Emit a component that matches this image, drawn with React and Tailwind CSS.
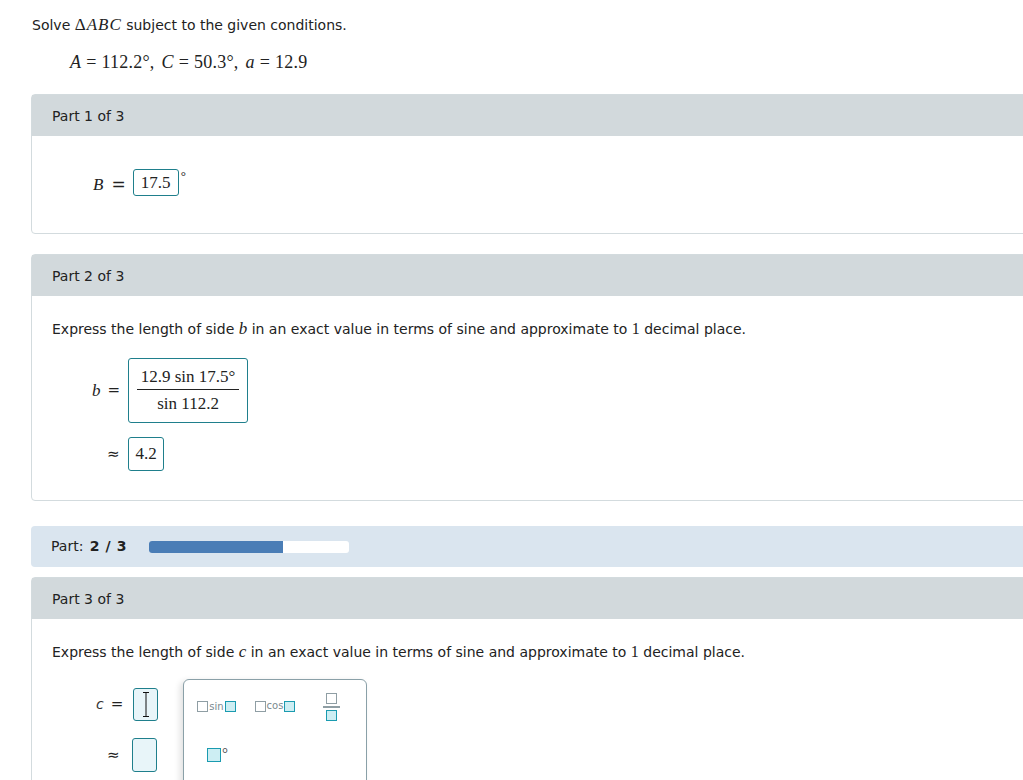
import { useState } from 'react';

const sans = { fontFamily: '"DejaVu Sans", Verdana, sans-serif' };
const serif = { fontFamily: '"Liberation Serif", "Times New Roman", serif' };
const approx = { fontFamily: '"DejaVu Sans", sans-serif' };

function Card({ title, children, bodyClass = '' }) {
  return (
    <div className="w-[1000px] rounded-t-[4px] rounded-bl-[4px] border border-[#d3dbde] bg-white">
      <div className="flex h-[41px] items-center bg-[#d2d9dc] pl-[20px] pt-[1px] text-[14px] text-[#222]">{title}</div>
      <div className={bodyClass}>{children}</div>
    </div>
  );
}

function Box({ children, className = '' }) {
  return (
    <div className={`flex items-center justify-center rounded-[3px] border border-[#1f7f8c] bg-white ${className}`}>
      {children}
    </div>
  );
}

function Slot({ filled, size = 'h-[11px] w-[11px]' }) {
  return (
    <span
      className={`inline-block shrink-0 border-[1.5px] ${size} ${filled ? 'border-[#1a9bb0] bg-[#cdeef3]' : 'border-[#8f9ea4] bg-white'}`}
    />
  );
}

function Eq() {
  return <span className="mx-[5px]">=</span>;
}

export default function App() {
  const [progress] = useState(67);

  return (
    <div className="min-h-[780px] w-full overflow-hidden bg-white text-[#222]" style={sans}>
      <div className="pl-[31px] pt-[15px]">
        <p className="pl-[1px] text-[14px] leading-[20px]">
          Solve <span style={serif} className="text-[17px] tracking-[1px]">Δ<i>ABC</i></span> subject to the given conditions.
        </p>
        <p className="mt-[17px] pl-[39px] text-[18px] leading-[20px] tracking-[0.2px]" style={serif}>
          <i>A</i><Eq />112.2°<span className="mr-[7px]">,</span>
          <i>C</i><Eq />50.3°<span className="mr-[7px]">,</span>
          <i>a</i><Eq />12.9
        </p>

        {/* Part 1 */}
        <div className="mt-[22px]">
          <Card title="Part 1 of 3" bodyClass="h-[97px] pt-[33px]">
            <div className="flex items-start pl-[61px]">
              <span className="mt-[3px] text-[17px]" style={serif}><i>B</i></span>
              <span className="ml-[8px] mr-[7px] mt-[3px] text-[17px]" style={sans}>=</span>
              <Box className="h-[27px] w-[46px] text-[17px]"><span style={serif}>17.5</span></Box>
              <span className="ml-[2px] -mt-[3px] text-[13px]" style={serif}>°</span>
            </div>
          </Card>
        </div>

        {/* Part 2 */}
        <div className="mt-[20px]">
          <Card title="Part 2 of 3" bodyClass="h-[204px] pt-[23px] pl-[20px]">
            <p className="text-[14px] leading-[20px]">
              Express the length of side <i style={serif} className="text-[17px]">b</i> in an exact value in terms of sine and approximate to <span style={serif} className="text-[16px]">1</span> decimal place.
            </p>
            <div className="mt-[19px] flex items-center pl-[40px]">
              <span className="text-[17px]" style={serif}><i>b</i></span>
              <span className="ml-[7px] mr-[8px] text-[15px]" style={sans}>=</span>
              <Box className="h-[65px] w-[120px] flex-col">
                <div className="flex flex-col items-center" style={serif}>
                  <span className="px-[2px] pb-[3px] text-[17px] leading-[18px]">12.9 sin 17.5°</span>
                  <span className="h-[1px] w-[102px] bg-[#222]" />
                  <span className="pt-[5px] text-[17px] leading-[18px]">sin 112.2</span>
                </div>
              </Box>
            </div>
            <div className="mt-[14px] flex items-center pl-[55px]">
              <span className="mr-[9px] w-[12px] text-[15px] leading-[20px]" style={approx}>≈</span>
              <Box className="h-[34px] w-[36px] text-[17px]"><span style={serif}>4.2</span></Box>
            </div>
          </Card>
        </div>

        {/* Progress */}
        <div className="mt-[25px] flex h-[41px] w-[1000px] items-center rounded-t-[4px] rounded-bl-[4px] bg-[#dae5ef] pl-[20px]">
          <span className="text-[14px]">Part: <b className="ml-[2px]">2<span className="mx-[6px]">/</span>3</b></span>
          <div className="ml-[23px] h-[12px] w-[200px] overflow-hidden rounded-[3px] bg-white">
            <div className="h-full bg-[#4a7db6]" style={{ width: `${progress}%` }} />
          </div>
        </div>

        {/* Part 3 */}
        <div className="mt-[10px]">
          <Card title="Part 3 of 3" bodyClass="h-[200px] pt-[23px] pl-[20px]">
            <p className="text-[14px] leading-[20px]">
              Express the length of side <i style={serif} className="text-[17px]">c</i> in an exact value in terms of sine and approximate to <span style={serif} className="text-[16px]">1</span> decimal place.
            </p>
            <div className="mt-[17px] flex items-start">
              <div className="flex flex-col">
                <div className="mt-[9px] flex items-center pl-[44px]">
                  <span className="text-[14px] italic text-[#333]" style={sans}>c</span>
                  <span className="ml-[7px] mr-[10px] text-[15px]">=</span>
                  <div className="flex h-[33px] w-[25px] items-center justify-center rounded-[3px] border border-[#1f7f8c] bg-[#e8f5f9]">
                    <svg width="8" height="27" viewBox="0 0 8 27">
                      <path d="M1 1.5h6M4 1.5v24M1 25.5h6" stroke="#111" strokeWidth="1" fill="none" />
                    </svg>
                  </div>
                </div>
                <div className="mt-[17px] flex items-center pl-[55px]">
                  <span className="mr-[13px] w-[12px] text-[15px] leading-[20px]" style={approx}>≈</span>
                  <div className="h-[34px] w-[25px] rounded-[3px] border border-[#1f7f8c] bg-[#e8f5f9]" />
                </div>
              </div>
              <div className="ml-[25px] h-[120px] w-[184px] rounded-[6px] border border-[#8aa0a8] bg-white shadow-[-3px_2px_6px_rgba(0,0,0,0.12)]">
                <div className="flex items-start pl-[13px] pt-[13px]">
                  <div className="mt-[8px] flex items-center text-[10px] leading-[10px] text-[#7a8a90]">
                    <Slot /><span className="mx-[1px]">sin</span><Slot filled />
                  </div>
                  <div className="ml-[19px] mt-[8px] flex items-center text-[10px] leading-[10px] text-[#7a8a90]">
                    <Slot /><span className="mx-[1px] -mt-[2px]">cos</span><Slot filled />
                  </div>
                  <div className="ml-[28px] flex flex-col items-center">
                    <Slot />
                    <span className="my-[2px] h-[1.5px] w-[17px] bg-[#8f9ea4]" />
                    <Slot filled />
                  </div>
                </div>
                <div className="mt-[25px] flex items-start pl-[23px]">
                  <span className="mt-[2px] inline-block h-[14px] w-[14px] border-[1.5px] border-[#1a9bb0] bg-[#cdeef3]" />
                  <span className="-mt-[1px] ml-[1px] text-[9px] leading-[10px] text-[#555]">o</span>
                </div>
              </div>
            </div>
          </Card>
        </div>
      </div>
    </div>
  );
}
